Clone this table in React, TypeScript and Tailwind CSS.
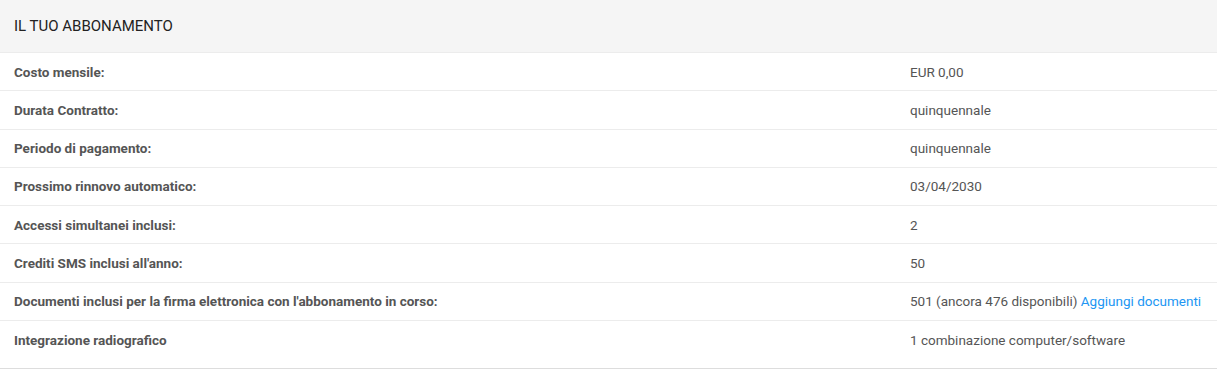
const rows: { label: string; value: React.ReactNode }[] = [
  { label: 'Costo mensile:', value: 'EUR 0,00' },
  { label: 'Durata Contratto:', value: 'quinquennale' },
  { label: 'Periodo di pagamento:', value: 'quinquennale' },
  { label: 'Prossimo rinnovo automatico:', value: '03/04/2030' },
  { label: 'Accessi simultanei inclusi:', value: '2' },
  { label: "Crediti SMS inclusi all'anno:", value: '50' },
  {
    label: "Documenti inclusi per la firma elettronica con l'abbonamento in corso:",
    value: (
      <>
        501 (ancora 476 disponibili){' '}
        <a href="#" className="text-[#2196f3]">
          Aggiungi documenti
        </a>
      </>
    ),
  },
  { label: 'Integrazione radiografico', value: '1 combinazione computer/software' },
]

export default function App() {
  return (
    <div className="w-[1217px] bg-white font-['Roboto',sans-serif] text-[13.5px] text-[#555]">
      <div className="h-[52px] bg-[#f5f5f5] flex items-center px-[14px] text-[15px] text-[#222]">
        IL TUO ABBONAMENTO
      </div>
      <div className="border-b border-[#ddd] pb-[10px]">
        {rows.map((r) => (
          <div
            key={r.label}
            className="grid grid-cols-[896px_1fr] items-center h-[38.3px] border-t border-[#ececec] px-[14px]"
          >
            <div className="font-bold">{r.label}</div>
            <div>{r.value}</div>
          </div>
        ))}
      </div>
    </div>
  )
}
